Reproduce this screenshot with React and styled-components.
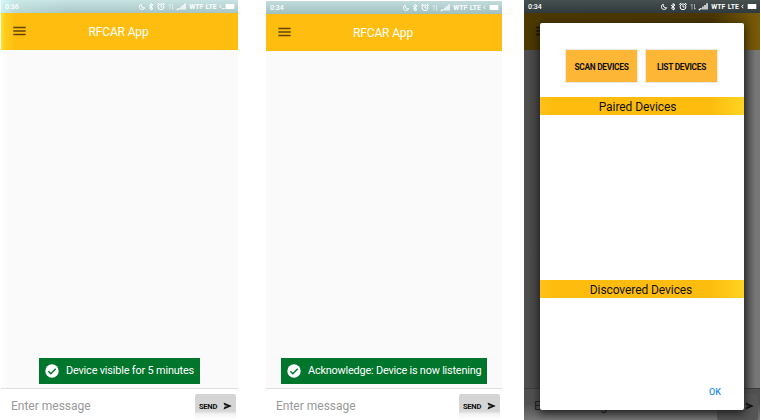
import React from "react";
import styled, { createGlobalStyle } from "styled-components";

const GlobalStyle = createGlobalStyle`
  * { box-sizing: border-box; }
  body { margin: 0; background: #fff; font-family: Roboto, sans-serif; overflow: hidden; }
  button { font-family: inherit; border: 0; padding: 0; margin: 0; white-space: nowrap; }
`;

const Gallery = styled.main`
  display: grid;
  grid-template-columns: 265px 258px 236px;
  width: 761px;
  height: 420px;
  padding-left: 1px;
`;

const Phone = styled.section`
  position: relative;
  display: flex;
  flex-direction: column;
  width: ${(p) => p.$width}px;
  height: 420px;
  padding-top: ${(p) => p.$top || 0}px;
  background: #fff;
  overflow: hidden;
`;

const StatusBar = styled.header`
  display: flex;
  flex: none;
  align-items: center;
  height: 13px;
  padding: 0 3px 0 4px;
  color: #fff;
  font-size: 7px;
  font-weight: 500;
  line-height: 12px;
  background: ${(p) =>
    p.$dark
      ? "linear-gradient(#46504f, #303a3d)"
      : p.$glow
        ? "linear-gradient(90deg, rgba(213,255,255,.7) 0, rgba(205,240,240,.4) 14px, transparent 70px), linear-gradient(#c9e3e3, #a8c6c6)"
        : "linear-gradient(#c2dcdc, #a0c0c0)"};
`;

const Clock = styled.span`
  width: 134px;
  padding-top: 1px;
`;

const StatusIcons = styled.svg`
  flex: none;
  display: block;
`;

const Carrier = styled.span`
  width: 30px;
  margin-left: 3px;
  padding-top: 1px;
  white-space: nowrap;
  font-size: 6.8px;
  font-weight: 700;
  word-spacing: 0.8px;
`;

const AppBar = styled.div`
  position: relative;
  display: flex;
  flex: none;
  align-items: center;
  justify-content: center;
  height: 37px;
  color: #fff;
  font-size: 12px;
  letter-spacing: -0.15px;
  line-height: 37px;
  padding: 2px 2px 0 0;
  background: ${(p) =>
    p.$dark
      ? "linear-gradient(90deg, #4c3900, #493600 80%, #7a5b08)"
      : p.$glow
        ? "linear-gradient(90deg, #ffdf2b 0, #ffca19 5px, #ffbe0f 14px)"
        : "#ffbe0f"};
`;

const MenuIcon = styled.svg`
  position: absolute;
  left: 12px;
  top: 13px;
`;

const Content = styled.div`
  display: flex;
  flex: 1;
  align-items: flex-end;
  padding: 0 0 4px ${(p) => p.$inset || 0}px;
  background: ${(p) =>
    p.$dark
      ? "linear-gradient(90deg, #505050, #454545 15px, #454545 217px, #777 232px)"
      : p.$glow
        ? "linear-gradient(90deg, #fff, #fafafa 8px)"
        : "#fafafa"};
`;

const Toast = styled.div`
  display: flex;
  align-items: center;
  width: ${(p) => p.$width}px;
  height: 26px;
  padding: 0 0 1px 6px;
  gap: 7px;
  color: #fff;
  background: #00752c;
  font-size: 10.9px;
  letter-spacing: ${(p) => p.$tracking}px;
  white-space: nowrap;
`;

const CheckIcon = styled.svg`
  flex: none;
`;

const Composer = styled.footer`
  display: flex;
  flex: none;
  align-items: flex-start;
  justify-content: space-between;
  height: 32px;
  padding: 5px 2px 0 10px;
  border-top: 1px solid ${(p) => (p.$dark ? "#3c3c3c" : "#dedede")};
  background: ${(p) => (p.$dark ? "linear-gradient(#505050 15px, #7a7a7a 32px)" : "#fff")};
`;

const Placeholder = styled.span`
  margin-top: 5px;
  color: ${(p) => (p.$dark ? "#222" : "#999")};
  font-size: 12px;
  line-height: 14px;
  white-space: nowrap;
`;

const SendButton = styled.button`
  display: flex;
  align-items: center;
  justify-content: center;
  gap: 6px;
  width: 41px;
  height: 26px;
  padding-bottom: 2px;
  color: #111;
  border-radius: 2px;
  font-size: 7.6px;
  font-weight: 700;
  letter-spacing: -0.25px;
  background: ${(p) =>
    p.$dark ? "#555" : "linear-gradient(#d4d4d4 0, #d6d6d6 17px, #f3f3f3 20px, #fff 26px)"};
`;

const Dialog = styled.div`
  position: absolute;
  left: 16px;
  top: 23px;
  display: flex;
  flex-direction: column;
  width: 204px;
  height: 387px;
  border-radius: 2px;
  background: #fff;
  box-shadow: 0 3px 8px 1px rgba(0, 0, 0, 0.6);
`;

const Actions = styled.div`
  display: flex;
  flex: none;
  justify-content: center;
  gap: 9px;
  height: 74px;
  padding: 27px 1px 0 0;
`;

const ActionButton = styled.button`
  width: 71px;
  height: 32px;
  padding-top: 1px;
  color: #111;
  background: #feb636;
  box-shadow: 0 0 1px 1px rgba(220, 220, 210, 0.6);
  font-size: 8.4px;
  font-weight: 700;
  letter-spacing: -0.3px;
`;

const SectionTitle = styled.h2`
  flex: none;
  height: 18px;
  margin: 0;
  padding-right: ${(p) => p.$shift}px;
  color: #111;
  background: linear-gradient(90deg, #ffc21b, #febd0e 12px, #febd0e 170px, #ffd322 204px);
  font-size: 12px;
  font-weight: 400;
  letter-spacing: -0.08px;
  line-height: 20px;
  text-align: center;
`;

const DeviceList = styled.div`
  flex: none;
  height: ${(p) => p.$height}px;
`;

const OkButton = styled.button`
  align-self: flex-end;
  width: 14px;
  height: 12px;
  margin-right: 22px;
  color: #2b91f0;
  background: none;
  font-size: 9px;
  font-weight: 500;
  line-height: 12px;
`;

function Status({ time, dark, glow }) {
  return (
    <StatusBar $dark={dark} $glow={glow}>
      <Clock>{time}</Clock>
      <StatusIcons width="48" height="13" viewBox="0 0 48 13" fill="none" stroke="#fff" strokeWidth="1">
        <path d="M3.2 4.2C1 5 .8 8.7 3.2 9.3c1.6.4 3-.4 3.6-1.5C4.6 8.2 2.8 6.7 3.2 4.2z" />
        <path d="M11 5l4 3.5L13 10V3.5l2 1.5L11 8.5" />
        <circle cx="23" cy="6.8" r="2.9" />
        <path d="M19.2 4.5l2-1.5M26.8 4.5l-2-1.500M23 5.200V7h1.500" />
        <path opacity=".5" d="M32 9.500V4.200l-1.200 1.300M34.500 4v5.300l1.200-1.300" />
        <path d="M38.700 9.500h1.400M40.900 9.500V8M43 9.500V6.500M45 9.500V5M47 9.500V3.300" strokeWidth="1.400" />
      </StatusIcons>
      <Carrier>WTF LTE</Carrier>
      <StatusIcons width="16" height="13" viewBox="0 0 16 13">
        <path d="M2.300 4.800l-1.500 1.700 1.500 1.700" fill="none" stroke="#fff" strokeWidth="1" />
        {glow && <path d="M3 8.600h3" stroke="#fff" strokeWidth="0.8" />}
        <rect x="6.700" y="4" width="8.600" height="5" fill="#fff" />
      </StatusIcons>
    </StatusBar>
  );
}

function Screen({ time, dark, glow, width, top, title, inset, toast, toastWidth, tracking, children }) {
  return (
    <Phone $width={width} $top={top}>
      <Status time={time} dark={dark} glow={glow} />
      <AppBar $dark={dark} $glow={glow}>
        <MenuIcon width="13" height="10" viewBox="0 0 13 10">
          <path d="M.3 1.5h12.4M.3 5h12.4M.3 8.5h12.4" stroke={dark ? "#171200" : "#614508"} strokeWidth="1.3" />
        </MenuIcon>
        {title}
      </AppBar>
      <Content $dark={dark} $glow={glow} $inset={inset}>
        {toast && (
          <Toast $width={toastWidth} $tracking={tracking}>
            <CheckIcon width="14" height="14" viewBox="0 0 14 14">
              <circle cx="7" cy="7" r="6.7" fill="#fff" />
              <path d="M3.4 7.2l2.5 2.5 4.8-5" fill="none" stroke="#00752c" strokeWidth="1.5" />
            </CheckIcon>
            {toast}
          </Toast>
        )}
      </Content>
      <Composer $dark={dark}>
        <Placeholder $dark={dark}>Enter message</Placeholder>
        <SendButton $dark={dark}>
          SEND
          <svg width="9" height="8" viewBox="0 0 9 8">
            <path d="M.5.5L8.8 4 .5 7.5l1-2.8L5 4 1.5 3.3z" fill="#111" />
          </svg>
        </SendButton>
      </Composer>
      {children}
    </Phone>
  );
}

export default function App() {
  return (
    <>
      <GlobalStyle />
      <Gallery>
        <Screen time="0:36" glow width={237} title="RFCAR App" inset={38} toast="Device visible for 5 minutes" toastWidth={161} tracking={-0.17} />
        <Screen time="0:34" width={236} top={1} title="RFCAR App" inset={15} toast="Acknowledge: Device is now listening" toastWidth={206} tracking={-0.2} />
        <Screen time="0:34" dark width={236}>
          <Dialog>
            <Actions>
              <ActionButton>SCAN DEVICES</ActionButton>
              <ActionButton>LIST DEVICES</ActionButton>
            </Actions>
            <SectionTitle $shift={9}>Paired Devices</SectionTitle>
            <DeviceList $height={165} />
            <SectionTitle $shift={2}>Discovered Devices</SectionTitle>
            <DeviceList $height={88} />
            <OkButton>OK</OkButton>
          </Dialog>
        </Screen>
      </Gallery>
    </>
  );
}
